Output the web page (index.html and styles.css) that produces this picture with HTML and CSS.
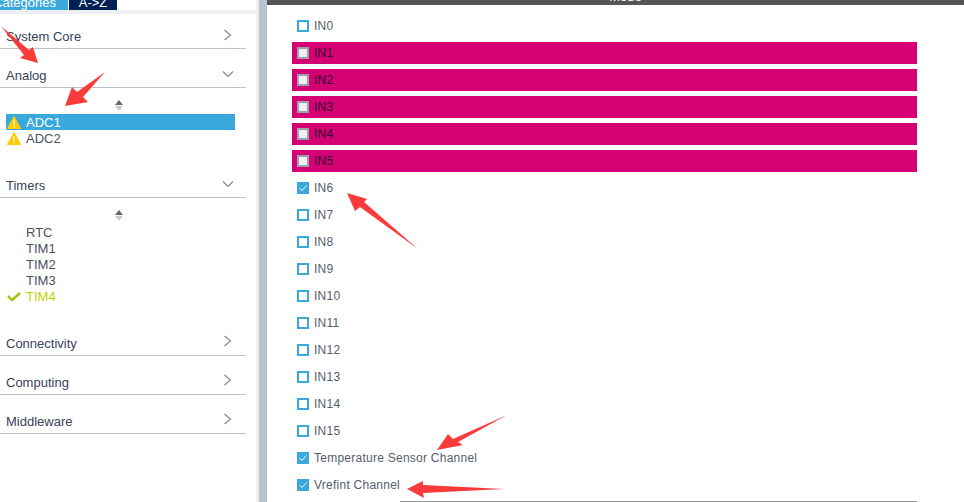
FILE: index.html
```html
<!DOCTYPE html>
<html lang="en">
<head>
    <meta charset="utf-8">
    <title>Pinout</title>
    <link rel="stylesheet" href="styles.css">
</head>
<body>
<aside class="sidebar">
    <div class="tabs">
        <div class="tab tab-active"><span>Categories</span></div>
        <div class="tab tab-dark"><span>A-&gt;Z</span></div>
    </div>
    <div class="strip"></div>

    <div class="cat cat-first">
        <span>System Core</span>
        <svg class="chev" width="10" height="12" viewBox="0 0 10 12"><path d="M1.5 1l6 5-6 5"/></svg>
    </div>
    <div class="cat">
        <span>Analog</span>
        <svg class="chev chev-down" width="12" height="10" viewBox="0 0 12 10"><path d="M1 2.5l5 5 5-5"/></svg>
    </div>
    <div class="tree">
        <div class="sort"><i class="up"></i><i class="down"></i></div>
        <div class="item item-selected">
            <svg class="mark" width="14" height="13" viewBox="0 0 14 13"><path class="warn" d="M7 .5l6.6 12H.4z"/><path class="bang" d="M6.3 4.5h1.4l-.2 4.5h-1zM6.3 10h1.4v1.5H6.3z"/></svg>
            ADC1
        </div>
        <div class="item">
            <svg class="mark" width="14" height="13" viewBox="0 0 14 13"><path class="warn" d="M7 .5l6.6 12H.4z"/><path class="bang" d="M6.3 4.5h1.4l-.2 4.5h-1zM6.3 10h1.4v1.5H6.3z"/></svg>
            ADC2
        </div>
    </div>
    <div class="cat">
        <span>Timers</span>
        <svg class="chev chev-down" width="12" height="10" viewBox="0 0 12 10"><path d="M1 2.5l5 5 5-5"/></svg>
    </div>
    <div class="tree">
        <div class="sort"><i class="up"></i><i class="down"></i></div>
        <div class="item"><span class="mark"></span>RTC</div>
        <div class="item"><span class="mark"></span>TIM1</div>
        <div class="item"><span class="mark"></span>TIM2</div>
        <div class="item"><span class="mark"></span>TIM3</div>
        <div class="item item-ok">
            <svg class="mark" width="14" height="13" viewBox="0 0 14 13"><path class="tick" d="M1 6l4 4 8-7"/></svg>
            TIM4
        </div>
    </div>
    <div class="cat">
        <span>Connectivity</span>
        <svg class="chev" width="10" height="12" viewBox="0 0 10 12"><path d="M1.5 1l6 5-6 5"/></svg>
    </div>
    <div class="cat">
        <span>Computing</span>
        <svg class="chev" width="10" height="12" viewBox="0 0 10 12"><path d="M1.5 1l6 5-6 5"/></svg>
    </div>
    <div class="cat">
        <span>Middleware</span>
        <svg class="chev" width="10" height="12" viewBox="0 0 10 12"><path d="M1.5 1l6 5-6 5"/></svg>
    </div>
</aside>
<div class="gutter"></div>
<main class="main">
    <div class="mode-bar"><span>Mode</span></div>
    <div class="channels">
        <div class="row"><span class="box"></span>IN0</div>
        <div class="row row-busy"><span class="box"></span>IN1</div>
        <div class="row row-busy"><span class="box"></span>IN2</div>
        <div class="row row-busy"><span class="box"></span>IN3</div>
        <div class="row row-busy"><span class="box"></span>IN4</div>
        <div class="row row-busy"><span class="box"></span>IN5</div>
        <div class="row"><span class="box box-on"><svg width="12" height="12" viewBox="0 0 12 12"><path d="M2.5 6l2.5 2.5 4.5-5"/></svg></span>IN6</div>
        <div class="row"><span class="box"></span>IN7</div>
        <div class="row"><span class="box"></span>IN8</div>
        <div class="row"><span class="box"></span>IN9</div>
        <div class="row"><span class="box"></span>IN10</div>
        <div class="row"><span class="box"></span>IN11</div>
        <div class="row"><span class="box"></span>IN12</div>
        <div class="row"><span class="box"></span>IN13</div>
        <div class="row"><span class="box"></span>IN14</div>
        <div class="row"><span class="box"></span>IN15</div>
        <div class="row"><span class="box box-on"><svg width="12" height="12" viewBox="0 0 12 12"><path d="M2.5 6l2.5 2.5 4.5-5"/></svg></span>Temperature Sensor Channel</div>
        <div class="row"><span class="box box-on"><svg width="12" height="12" viewBox="0 0 12 12"><path d="M2.5 6l2.5 2.5 4.5-5"/></svg></span>Vrefint Channel</div>
    </div>
    <div class="rule"></div>
</main>
<!-- red annotation arrows drawn on top of the screenshot -->
<svg class="arrows" width="964" height="502" viewBox="0 0 964 502">
    <polygon points="1,26 29,50 33,47 38,63 20,58 24,55"/>
    <polygon points="105,72 83,97 88,102 65,106 72,87 77,92"/>
    <polygon points="418,249 364,202 367,199 347,193 355,211 360,207"/>
    <polygon points="507,415 453,439 448,434 437,450 463,445 458,442"/>
    <polygon points="504,489 423,485 423,481 407,489 424,498 423,493"/>
</svg>
</body>
</html>
```

FILE: styles.css
```css
html, body {
    height: 100%;
}

body {
    margin: 0;
    display: flex;
    height: 502px;
    overflow: hidden;
    background: white;
    font-family: "Liberation Sans", Arial, sans-serif;
    font-size: 12px;
}

.sidebar {
    width: 256px;
    flex: none;
}

.tabs {
    display: flex;
    height: 10px;
    overflow: hidden;
    color: white;
    font-size: 13px;
}

.tab {
    display: flex;
    height: 10px;
    line-height: 6px;
    overflow: hidden;
}

.tab span {
    white-space: nowrap;
}

.tab-active {
    width: 68px;
    margin-right: 1px;
    justify-content: flex-end;
    padding-right: 12px;
    box-sizing: border-box;
    background: #39a9dc;
}

.tab-dark {
    width: 48px;
    justify-content: center;
    background: #002052;
}

.strip {
    height: 4px;
    background: #ecf0f3;
}

.cat {
    display: flex;
    justify-content: space-between;
    align-items: center;
    box-sizing: border-box;
    width: 246px;
    height: 39px;
    padding: 14px 13px 0 6px;
    border-bottom: 1px solid #b9c4cc;
    color: #39415a;
    font-size: 13px;
}

.cat-first {
    height: 35px;
    padding-top: 11px;
}

.chev {
    margin-bottom: 4px;
}

.chev-down {
    margin-bottom: 2px;
    margin-right: -1px;
}

.chev path {
    fill: none;
    stroke: #808890;
    stroke-width: 1.2;
}

.tree {
    padding: 9px 0 13px;
}

.sort {
    display: flex;
    flex-direction: column;
    align-items: center;
    gap: 1px;
    width: 238px;
    height: 17px;
    padding-top: 3px;
    box-sizing: border-box;
}

.sort i {
    width: 0;
    height: 0;
    border-left: 4.5px solid transparent;
    border-right: 4.5px solid transparent;
}

.sort .up {
    border-bottom: 5px solid #666;
}

.sort .down {
    border-top: 5px solid #ccc;
}

.item {
    display: flex;
    align-items: center;
    width: 229px;
    height: 16px;
    margin-left: 6px;
    color: #4a5060;
    font-size: 13px;
}

.mark {
    display: block;
    flex: none;
    width: 14px;
    height: 13px;
    margin-left: 1px;
    margin-right: 5px;
}

.item-selected {
    background: #39a9dc;
    color: white;
}

.item-ok {
    color: #c2d400;
}

.warn {
    fill: #ffcc00;
    stroke: #ffcc00;
    stroke-width: 1;
    stroke-linejoin: round;
}

.bang {
    fill: white;
}

.tick {
    fill: none;
    stroke: #a8c000;
    stroke-width: 2.4;
}

.gutter {
    width: 11px;
    flex: none;
    box-sizing: border-box;
    background: #b9c4cc;
    border-left: 3px solid #ecf0f3;
}

.main {
    flex: 1;
    min-width: 0;
}

.mode-bar {
    height: 5px;
    overflow: hidden;
    background: #555;
    color: white;
    font-size: 13px;
    text-align: center;
}

.mode-bar span {
    display: block;
    width: 717px;
    margin-top: -9px;
    line-height: 12px;
}

.channels {
    display: flex;
    flex-direction: column;
    gap: 5px;
    width: 625px;
    margin: 10px 0 0 25px;
}

.row {
    display: flex;
    align-items: center;
    gap: 5px;
    height: 22px;
    padding-left: 5px;
    color: #555c6c;
    font-size: 12px;
    letter-spacing: 0.25px;
}

.row-busy {
    background: #d50073;
    color: #2a0030;
}

.box {
    display: block;
    box-sizing: border-box;
    width: 12px;
    height: 12px;
    border: 2px solid #39a9dc;
    background: white;
}

.row-busy .box {
    border-color: #9aa3ab;
    background: #ecf0f3;
}

.box-on {
    border: none;
    background: #39a9dc;
}

.box-on svg {
    display: block;
}

.box-on path {
    fill: none;
    stroke: white;
    stroke-width: 1;
}

.rule {
    width: 517px;
    height: 1px;
    margin: 5px 0 0 133px;
    background: #999;
}

.arrows {
    position: absolute;
    top: 0;
    left: 0;
    pointer-events: none;
}

.arrows polygon {
    fill: #fb3a3a;
}
```
